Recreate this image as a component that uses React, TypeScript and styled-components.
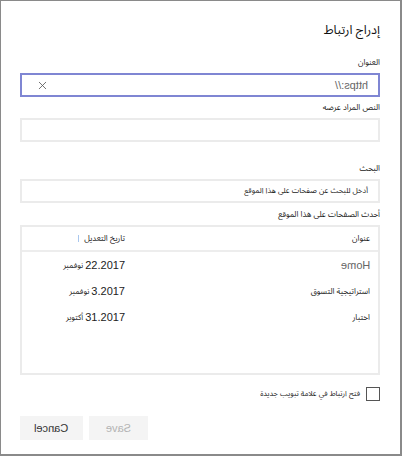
import styled, { createGlobalStyle } from 'styled-components';
import { X } from 'lucide-react';

const Global = createGlobalStyle`
  html, body { margin: 0; padding: 0; background: #fff; }
  body { font-family: 'Liberation Sans', 'Noto Sans Arabic', sans-serif; }
`;

const Dialog = styled.div`
  direction: rtl; box-sizing: border-box; width: 402px; height: 456px;
  border: 1px solid #8a8a8a; border-right-width: 2px; border-bottom-width: 2px;
  padding: 17px 20px 0 19px; background: #fff; color: #222;
  display: flex; flex-direction: column;
`;
const Title = styled.h1`
  margin: 0; height: 24px; line-height: 24px; font-size: 12.5px; font-weight: 400; color: #111;
`;
const FieldLabel = styled.label<{ $top: number }>`
  display: block; margin-top: ${p => p.$top}px; height: 14px; line-height: 14px;
  font-size: 8px; color: #222; margin-bottom: 3px;
`;
const InputBox = styled.div<{ $focus?: boolean }>`
  box-sizing: border-box; height: 24px; display: flex; align-items: center;
  justify-content: space-between; padding: 0 10px 0 14px;
  border: 2px solid ${p => (p.$focus ? '#7f86d3' : '#ebebeb')};
  font-size: 7.6px; color: #222;
`;
const Mirror = styled.span`display: inline-block; direction: ltr; transform: scaleX(-1);`;
const Muted = styled(Mirror)`color: #666; font-size: 11px;`;
const ClearIcon = styled(X)`color: #555; flex: none;`;
const List = styled.div`
  box-sizing: border-box; height: 150px; border: 2px solid #ebebeb;
`;
const Row = styled.div<{ $head?: boolean }>`
  display: grid; grid-template-columns: 245px 1fr; align-items: center;
  height: ${p => (p.$head ? 23 : 26)}px; padding-right: 8px; font-size: 8px; color: #222;
  ${p => p.$head && 'border-bottom: 2px solid #ededed;'}
`;
const DateCell = styled.span`display: flex; align-items: center; gap: 2px;`;
const Digits = styled.span`font-size: 11px; color: #222;`;
const HeadDate = styled.span`display: flex; align-items: center; gap: 5px;`;
const SortMark = styled.span`width: 1px; height: 7px; background: #a9c7ee;`;
const CheckRow = styled.label`
  display: flex; align-items: center; gap: 6px; margin-top: 12px; height: 14px;
  font-size: 7.5px; color: #222;
`;
const Box = styled.span`
  box-sizing: border-box; width: 14px; height: 14px; border: 1px solid #555; flex: none;
`;
const Buttons = styled.div`display: flex; justify-content: flex-end; gap: 6px; margin-top: 15px;`;
const Button = styled.button<{ $disabled?: boolean }>`
  height: 24px; width: ${p => (p.$disabled ? 59 : 63)}px; border: none; background: #f4f4f4;
  font-family: 'Liberation Sans', sans-serif; font-size: 11px;
  color: ${p => (p.$disabled ? '#b3b3b3' : '#333')}; padding: 0;
`;

const pages = [
  { title: 'Home', latin: true, date: '22.2017', month: 'نوفمبر' },
  { title: 'استراتيجية التسوق', latin: false, date: '3.2017', month: 'نوفمبر' },
  { title: 'اختبار', latin: false, date: '31.2017', month: 'أكتوبر' },
];

export default function App() {
  return (
    <>
      <Global />
      <Dialog>
        <Title>إدراج ارتباط</Title>

        <FieldLabel $top={14}>العنوان</FieldLabel>
        <InputBox $focus>
          <Muted>https://</Muted>
          <ClearIcon size={13} strokeWidth={1.5} />
        </InputBox>

        <FieldLabel $top={4}>النص المراد عرضه</FieldLabel>
        <InputBox />

        <FieldLabel $top={20}>البحث</FieldLabel>
        <InputBox>أدخل للبحث عن صفحات على هذا الموقع</InputBox>

        <FieldLabel $top={5}>أحدث الصفحات على هذا الموقع</FieldLabel>
        <List>
          <Row $head>
            <span>عنوان</span>
            <HeadDate>تاريخ التعديل <SortMark /></HeadDate>
          </Row>
          {pages.map((p, i) => (
            <Row key={i}>
              <span>{p.latin ? <Muted>{p.title}</Muted> : p.title}</span>
              <DateCell>
                <Digits>{p.date}</Digits>
                <span>{p.month}</span>
              </DateCell>
            </Row>
          ))}
        </List>

        <CheckRow>
          <Box />
          فتح ارتباط في علامة تبويب جديدة
        </CheckRow>

        <Buttons>
          <Button $disabled><Mirror>Save</Mirror></Button>
          <Button><Mirror>Cancel</Mirror></Button>
        </Buttons>
      </Dialog>
    </>
  );
}
